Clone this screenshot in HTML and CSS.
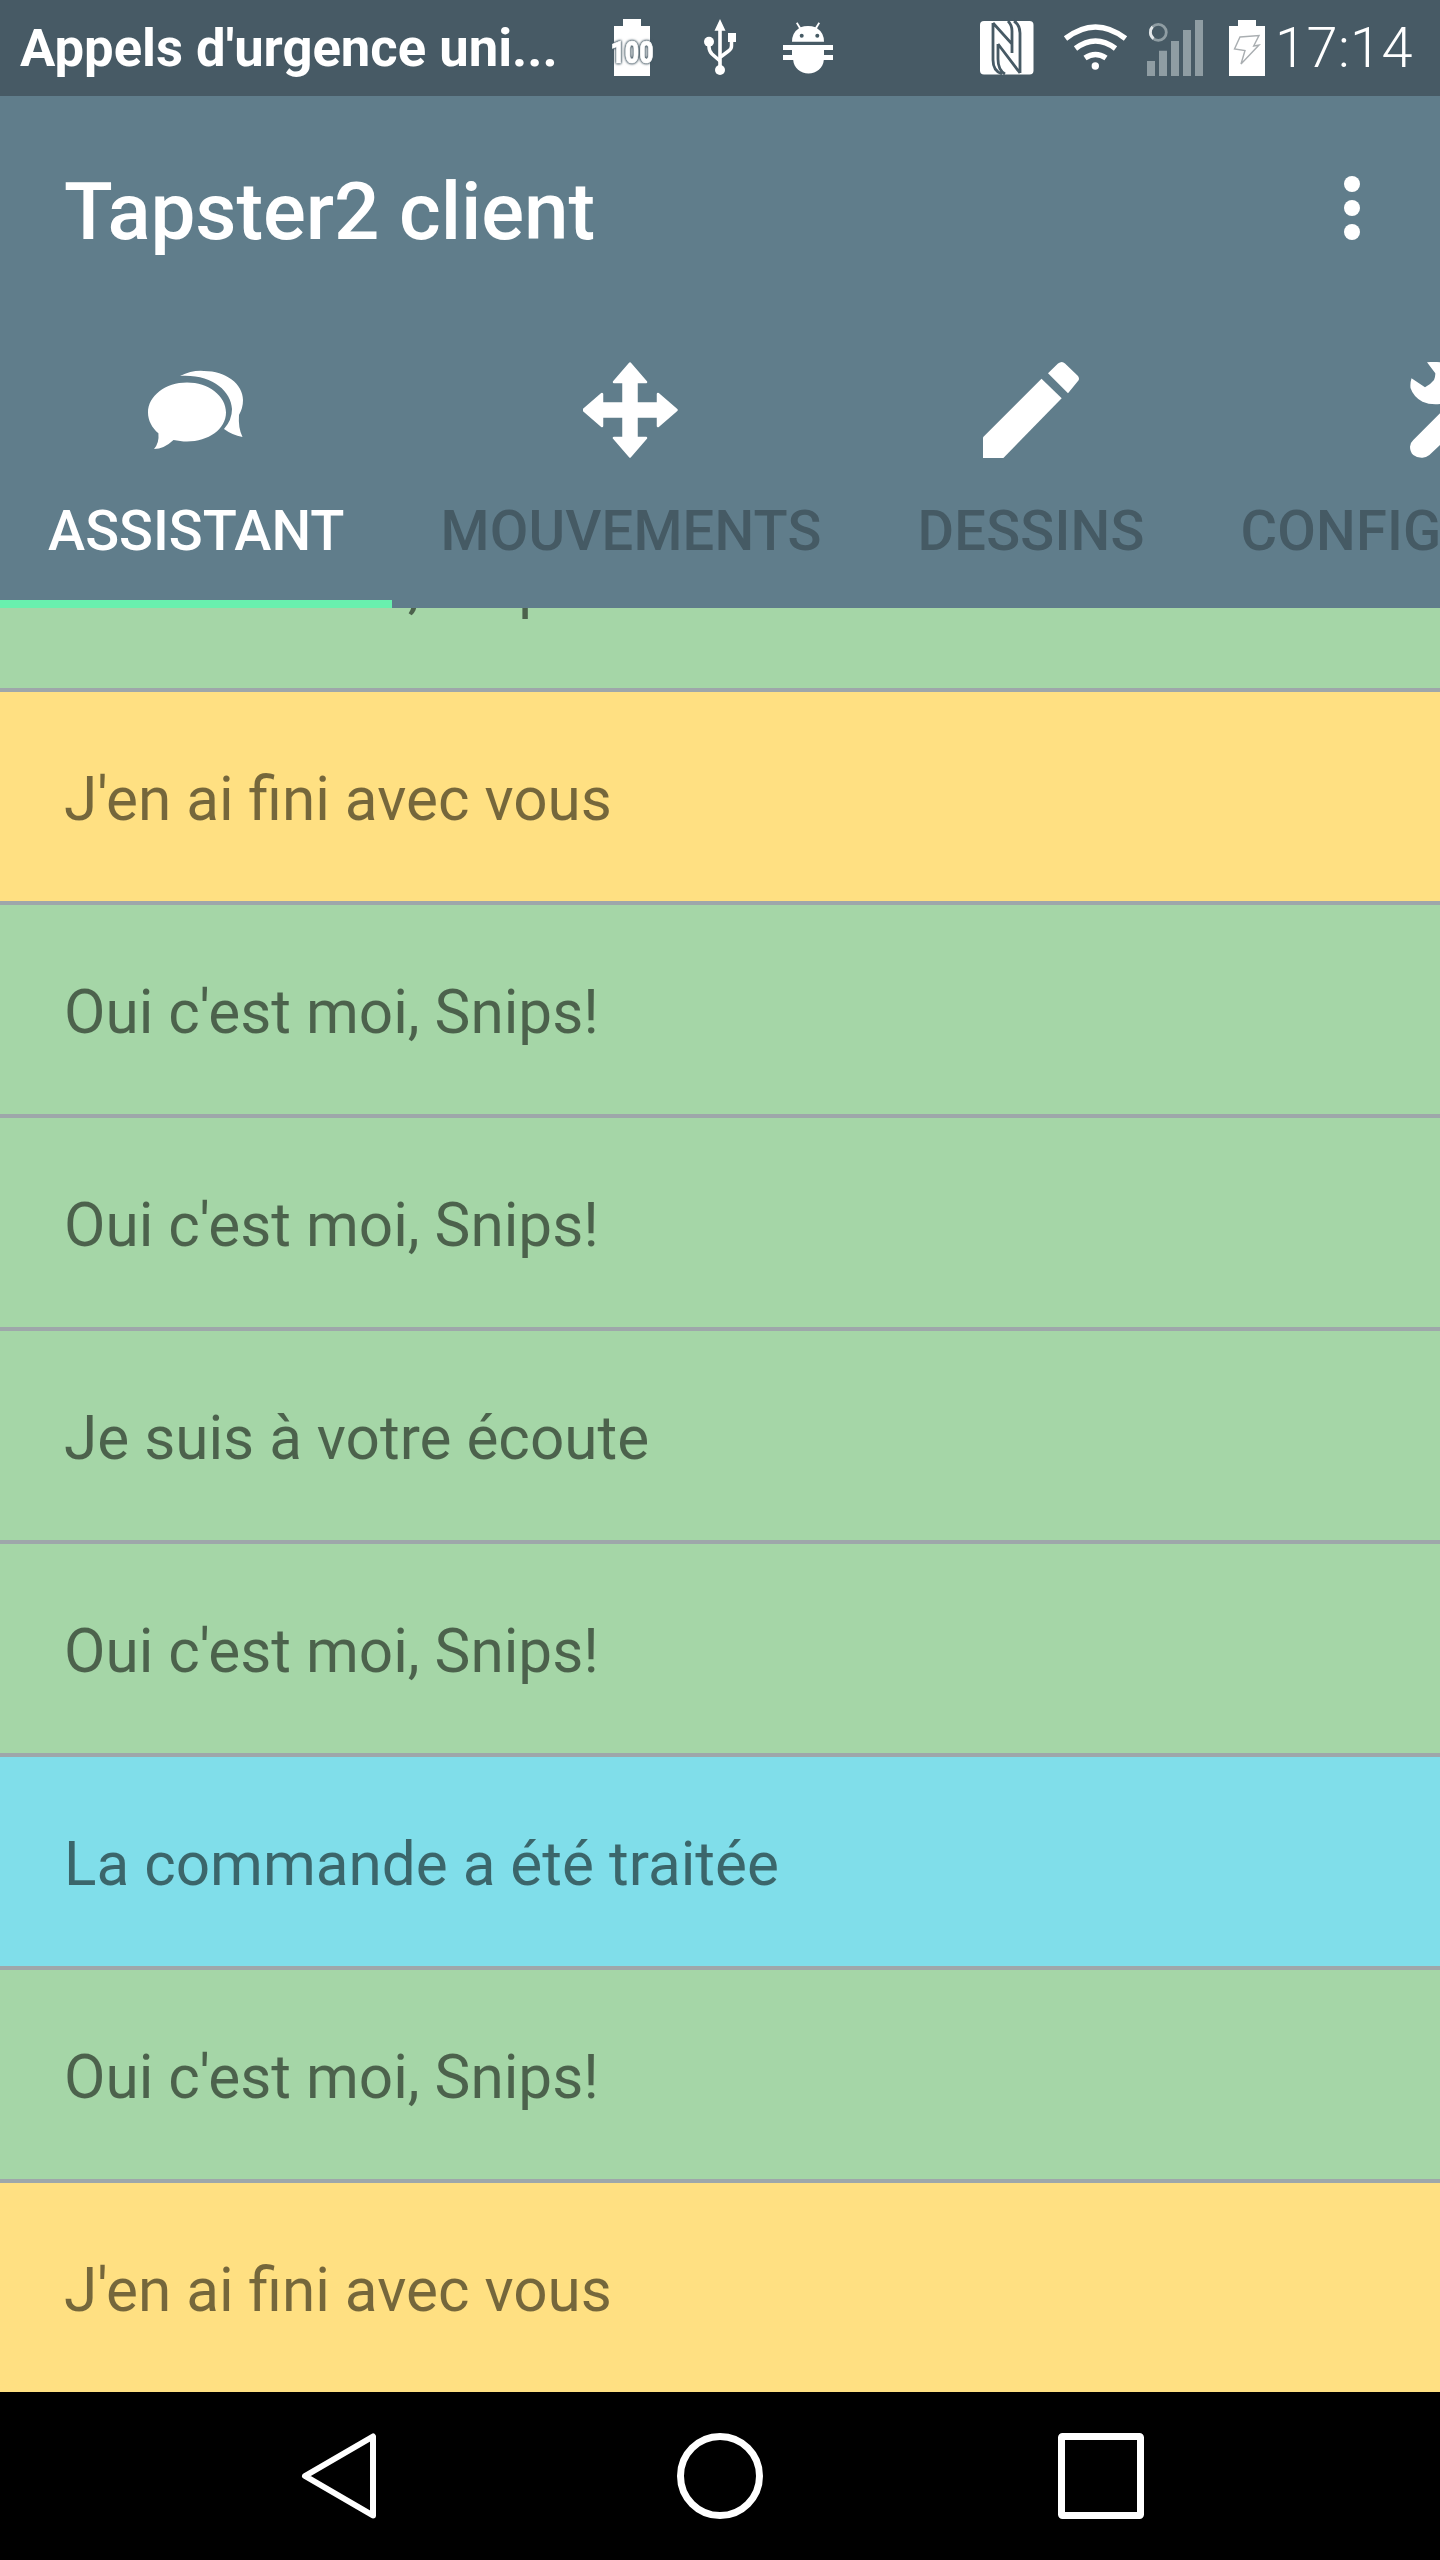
FILE: index.html
```html
<!DOCTYPE html>
<html lang="fr">
<head>
<meta charset="utf-8">
<title>Tapster2 client</title>
<link rel="stylesheet" href="styles.css">
</head>
<body>
<div class="phone">
  <header class="status">
    <div class="status-text">Appels d'urgence uni...</div>
    <svg class="si" width="44" height="96" viewBox="610 0 44 96">
      <path fill="#fff" d="M623 19h18v7h9v50h-36V26h9z"/>
      <text class="si-100" x="610.5" y="63" textLength="43" lengthAdjust="spacingAndGlyphs">100</text>
    </svg>
    <svg class="si si-usb" width="34" height="96" viewBox="703 0 34 96">
      <path fill="#fff" d="M720 19l5.5 11.700h-3.700V66h-3.600V30.700h-3.700z"/>
      <circle cx="720" cy="70" r="5" fill="#fff"/>
      <circle cx="709" cy="41.700" r="5" fill="#fff"/>
      <path fill="none" stroke="#fff" stroke-width="3.500" d="M709 42v5q0 4 3 7l8 7M731.500 40v6q0 3-3 5l-8 6"/>
      <rect x="728" y="33" width="8" height="9" fill="#fff"/>
    </svg>
    <svg class="si si-android" width="51" height="96" viewBox="782 0 51 96">
      <path fill="#fff" d="M792 41.700q0-9 7-13.500l-3-5 1.500-1 3.200 5.100q3.200-1.300 7.300-1.300t7.300 1.300l3.200-5.100 1.500 1-3 5q7 4.500 7 13.500z"/>
      <circle cx="801.700" cy="35.700" r="2" fill="#455a64"/>
      <circle cx="817.300" cy="35.700" r="2" fill="#455a64"/>
      <path fill="#fff" d="M783 45h50v5h-9v5h9v5h-9.200c-.6 8-7.400 13.500-15.300 13.500S793.800 68 793.200 60H783v-5h9v-5h-9z"/>
    </svg>
    <svg class="si si-nfc" width="54" height="96" viewBox="980 0 54 96">
      <rect x="980" y="21" width="53.500" height="53.500" rx="4" fill="#fff"/>
      <path fill="none" stroke="#475a65" stroke-width="2.800" d="M993 23v37q0 11 9 14M993 23l19 21v9M998 44l22 29M998 44v15q0 11 7 15M1014 21q6 4 6 12v40M1012 44V31q0-6-4-10"/>
    </svg>
    <svg class="si si-wifi" width="69" height="96" viewBox="1061 0 69 96">
      <path fill="none" stroke="#fff" stroke-width="5.500" d="M1065.500 38.500q30-23 60 0M1075.500 48.500q20-15 40 0M1085 58q10.500-7 21 0"/>
      <circle cx="1095.300" cy="66" r="3.700" fill="#fff"/>
    </svg>
    <svg class="si si-signal" width="56" height="96" viewBox="1147 0 56 96">
      <path fill="#8f9da3" d="M1147 61h8v15h-8zM1159 50.700h8V76h-8zM1171 41h8v35h-8zM1183 30h8v46h-8zM1195 20h8v56h-8z"/>
      <circle cx="1158.300" cy="32.300" r="8" fill="none" stroke="#8f9da3" stroke-width="2.800"/>
      <path fill="none" stroke="#e4e8ea" stroke-width="2.800" d="M1152.500 26.800a8 8 0 0 0 1 11.800"/>
    </svg>
    <svg class="si si-bat" width="36" height="96" viewBox="1229 0 36 96">
      <path fill="#fff" d="M1238 20h18v6h9v50h-36V26h9z"/>
      <path fill="none" stroke="#a9aeb1" stroke-width="1.400" d="M1240 37l19-1.500-5.300 10.500 5.300-1-18 19 4-13.500-10.500-1.500z"/>
    </svg>
    <div class="status-time">17:14</div>
  </header>

  <section class="appbar">
    <div class="toolbar">
      <h1 class="title">Tapster2 client</h1>
      <svg width="16" height="64" viewBox="0 0 16 64">
        <circle cx="8" cy="8" r="8" fill="#fff"/>
        <circle cx="8" cy="32" r="8" fill="#fff"/>
        <circle cx="8" cy="56" r="8" fill="#fff"/>
      </svg>
    </div>
    <nav class="tabs">
      <div class="tab tab-active">
        <svg width="96" height="96" viewBox="0 0 96 96">
          <path fill="#fff" d="M39 20.500c21.500 0 39 13.400 39 30s-17.500 29-39 29c-4.600 0-9-.6-13.500-1.500Q16 87 6 87q5.400-6 4.400-15.700C4 65.800 0 58.500 0 50.500c0-16.600 17.500-30 39-30z"/>
          <path fill="#fff" d="M32 14Q44 8 56 9c22 0 39 13 39 29q0 8-4 15q-1 13 3.500 22Q84 73 76 67q8-9 8-20C83 29 64 12 32 14z"/>
        </svg>
        <span class="tab-label">Assistant</span>
      </div>
      <div class="tab">
        <svg width="96" height="96" viewBox="1 0 96 96">
          <path fill="#fff" stroke="#fff" stroke-width="2.500" stroke-linejoin="round" d="M48 1.500L64 20H54.500V41.500H76V32L94.500 48L76 64V54.500H54.500V76H64L48 94.500L32 76H41.500V54.500H20V64L1.500 48L20 32V41.500H41.500V20H32z"/>
        </svg>
        <span class="tab-label">Mouvements</span>
      </div>
      <div class="tab">
        <svg width="96" height="96" viewBox="0 0 96 96">
          <path fill="#fff" d="M0 75.300L58.500 16.700 78.700 36.300 20.400 96H0z"/>
          <path fill="#fff" d="M65 11.300L75 1.500q4-3 7 0L95 14q2 3 0 5L85 31.300z"/>
        </svg>
        <span class="tab-label">Dessins</span>
      </div>
      <div class="tab tab-config">
        <svg width="96" height="96" viewBox="0 0 96 96">
          <path fill="#fff" d="M17 .3Q24-.5 30 .3L96 .3V42H30Q20 43 12.500 39.700 3.500 35 .5 26 0 21 1.500 16.300L15 25.300Q20 23 24 18 25.500 14.500 25.300 11.300z"/>
          <path fill="#fff" d="M30 51.300L3.300 78Q0 81 0 84.700 0 90 3.300 93 7 96 12.500 95.700 16 95.500 19.400 93L30 83h66V51.300z"/>
        </svg>
        <span class="tab-label">Configuration</span>
      </div>
    </nav>
  </section>

  <main class="list">
    <div class="row row-green row-first">Oui c'est moi, Snips!</div>
    <div class="row row-yellow">J'en ai fini avec vous</div>
    <div class="row row-green">Oui c'est moi, Snips!</div>
    <div class="row row-green">Oui c'est moi, Snips!</div>
    <div class="row row-green">Je suis à votre écoute</div>
    <div class="row row-green">Oui c'est moi, Snips!</div>
    <div class="row row-blue">La commande a été traitée</div>
    <div class="row row-green">Oui c'est moi, Snips!</div>
    <div class="row row-yellow">J'en ai fini avec vous</div>
  </main>

  <footer class="navbar">
    <svg width="86" height="86" viewBox="0 0 86 86">
      <path fill="none" stroke="#fff" stroke-width="6" stroke-linejoin="round" d="M9 43L77 3.500V82.500z"/>
    </svg>
    <svg width="86" height="86" viewBox="0 0 86 86">
      <circle cx="43" cy="43" r="39.500" fill="none" stroke="#fff" stroke-width="7"/>
    </svg>
    <svg width="86" height="86" viewBox="0 0 86 86">
      <rect x="3.500" y="3.500" width="79" height="79" rx="1" fill="none" stroke="#fff" stroke-width="7"/>
    </svg>
  </footer>
</div>
</body>
</html>
```

FILE: styles.css
```css
* { box-sizing: border-box; }
html, body { margin: 0; padding: 0; }
body { font-family: Roboto, "Liberation Sans", sans-serif; background: #000; }

.phone {
  width: 1440px;
  height: 2560px;
  display: flex;
  flex-direction: column;
  overflow: hidden;
}

.status {
  flex: none;
  height: 96px;
  display: flex;
  align-items: center;
  background: #475a65;
  color: #fff;
}
.status-text {
  flex: none;
  width: 610px;
  padding-left: 20px;
  font-size: 52.6px;
  font-weight: 700;
  white-space: nowrap;
}
.si { flex: none; display: block; }
.si-100 {
  font-size: 32px;
  font-weight: 900;
  fill: #fff;
  stroke: #fff;
  stroke-width: .7px;
  filter: drop-shadow(0 0 .8px #475a65) drop-shadow(0 0 .8px #475a65);
}
.si-usb { margin-left: 49px; }
.si-android { margin-left: 45px; }
.si-nfc { margin-left: 147px; }
.si-wifi { margin-left: 27px; }
.si-signal { margin-left: 17px; }
.si-bat { margin-left: 26px; }
.status-time { margin-left: 10px; font-size: 56px; font-weight: 300; letter-spacing: .4px; white-space: nowrap; }

.appbar { flex: none; height: 512px; display: flex; flex-direction: column; background: #607d8b; }
.toolbar {
  flex: none;
  height: 224px;
  display: flex;
  align-items: center;
  justify-content: space-between;
  padding: 0 80px 0 64px;
}
.title { margin: 7px 0 0; font-size: 80px; font-weight: 500; letter-spacing: -.1px; color: #fff; line-height: 1; }

.tabs { flex: 1; display: flex; overflow: hidden; }
.tab {
  flex: none;
  display: flex;
  flex-direction: column;
  align-items: center;
  padding: 42px 48px 0;
  border-bottom: 8px solid transparent;
}
.tab-active { border-bottom-color: #69f0ae; }
.tab svg { display: block; }
.tab-label {
  margin-top: 40px;
  font-size: 56px;
  line-height: 66px;
  font-weight: 500;
  letter-spacing: .2px;
  text-transform: uppercase;
  color: #455a64;
  white-space: nowrap;
}
.tab-config svg { align-self: flex-start; margin-left: 169px; }
.tab-config .tab-label { align-self: flex-start; }
.tab-active .tab-label { color: #fff; letter-spacing: 0; }

.list { flex: 1; min-height: 0; display: flex; flex-direction: column; overflow: hidden; }
.row {
  flex: none;
  height: 213px;
  display: flex;
  align-items: center;
  padding: 6px 0 0 64px;
  font-size: 60.25px;
  color: rgba(0, 0, 0, .54);
  border-bottom: 4px solid #9ea7aa;
}
.row-first { margin-top: -129px; }
.row-green { background: #a5d6a7; }
.row-yellow { background: #ffe082; }
.row-blue { background: #80deea; }

.navbar {
  flex: none;
  height: 168px;
  padding-top: 41px;
  display: flex;
  justify-content: center;
  gap: 295px;
  background: #000;
}
.navbar svg { display: block; }
```
